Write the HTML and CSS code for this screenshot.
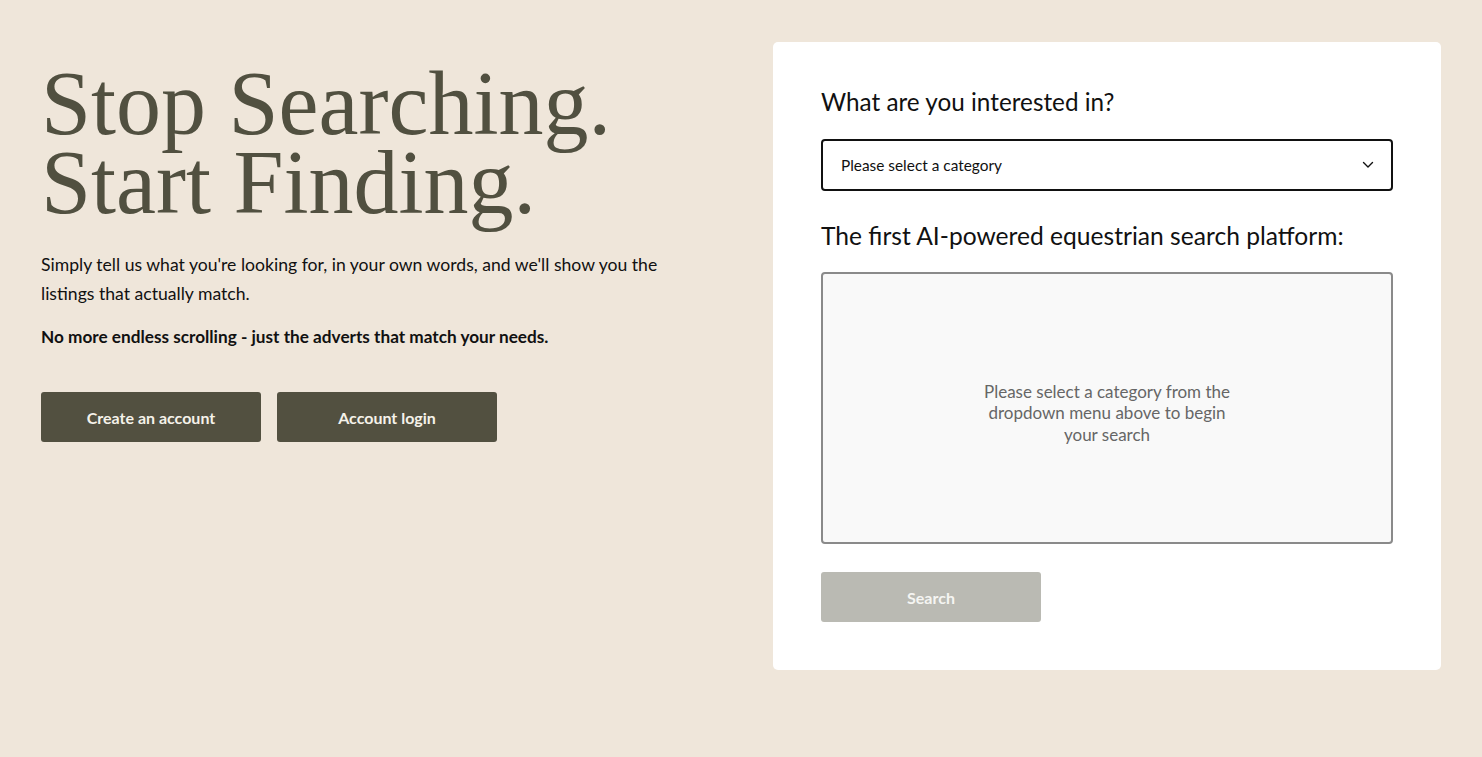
FILE: index.html
```html
<!DOCTYPE html>
<html lang="en">
<head>
<meta charset="utf-8">
<title>Stop Searching. Start Finding.</title>
<link rel="stylesheet" href="styles.css">
</head>
<body>
<main class="page">
  <section class="intro">
    <h1 class="headline"><span class="hl">Stop Searching.</span><span class="hl">Start Finding.</span></h1>
    <p class="lead">Simply tell us what you're looking for, in your own words, and we'll show you the listings that actually match.</p>
    <p class="lead strong">No more endless scrolling - just the adverts that match your needs.</p>
    <div class="actions">
      <a class="btn" href="#">Create an account</a>
      <a class="btn" href="#">Account login</a>
    </div>
  </section>
  <section class="card">
    <h2 class="card-title">What are you interested in?</h2>
    <div class="select">
      <span>Please select a category</span>
      <svg class="chev" width="12" height="8" viewBox="0 0 12 8"><path d="M1.5 1.5 6 6l4.5-4.5" fill="none" stroke="#111" stroke-width="1.4" stroke-linecap="round" stroke-linejoin="round"/></svg>
    </div>
    <h2 class="card-title second">The first AI-powered equestrian search platform:</h2>
    <div class="query">
      <p>Please select a category from the dropdown menu above to begin your search</p>
    </div>
    <button class="btn btn-disabled" type="button">Search</button>
  </section>
</main>
</body>
</html>
```
FILE: styles.css
```css
* { box-sizing: border-box; }
html, body { margin: 0; padding: 0; }
body {
  background: #efe6da;
  font-family: "Lato", "Noto Sans", sans-serif;
  color: #111;
  min-height: 757px;
}
.page {
  display: flex;
  align-items: flex-start;
  padding: 42px 41px 0 41px;
}
.intro {
  width: 732px;
  padding-top: 22px;
}
.headline {
  margin: 0;
  font-family: "Liberation Serif", "Times New Roman", serif;
  font-weight: 400;
  font-size: 90px;
  line-height: 79px;
  color: #515040;
}
.hl {
  display: block;
  height: 79px;
  overflow: visible;
}
.lead {
  margin: 28px 0 0;
  font-size: 17.6px;
  line-height: 29px;
  width: 660px;
}
.lead.strong {
  margin-top: 14px;
  font-weight: 700;
  font-size: 17.2px;
}
.actions {
  display: flex;
  gap: 16px;
  margin-top: 41px;
}
.btn {
  display: flex;
  align-items: center;
  justify-content: center;
  width: 220px;
  height: 50px;
  border-radius: 3px;
  background: #525040;
  color: #f5f2ea;
  font-family: inherit;
  font-weight: 700;
  font-size: 16px;
  text-decoration: none;
  border: none;
}
.card {
  width: 668px;
  background: #fff;
  border-radius: 5px;
  padding: 44px 48px 48px;
}
.card-title {
  margin: 0;
  font-weight: 400;
  font-size: 24.3px;
  line-height: 32px;
  color: #111;
}
.card-title.second { margin-top: 29px; font-size: 24.6px; }
.select {
  margin-top: 21px;
  height: 52px;
  border: 2px solid #111;
  border-radius: 4px;
  display: flex;
  align-items: center;
  justify-content: space-between;
  padding: 0 17px 0 18px;
  font-size: 15.4px;
}
.query {
  margin-top: 20px;
  height: 272px;
  border: 2px solid #8a8a8a;
  border-radius: 4px;
  background: #f9f9f9;
  display: flex;
  align-items: center;
  justify-content: center;
  padding-top: 10px;
}
.query p {
  margin: 0;
  width: 272px;
  text-align: center;
  color: #666;
  font-size: 17px;
  line-height: 21.5px;
}
.btn-disabled {
  margin-top: 28px;
  background: #babab3;
  color: #f5f5f2;
  cursor: default;
}
```
